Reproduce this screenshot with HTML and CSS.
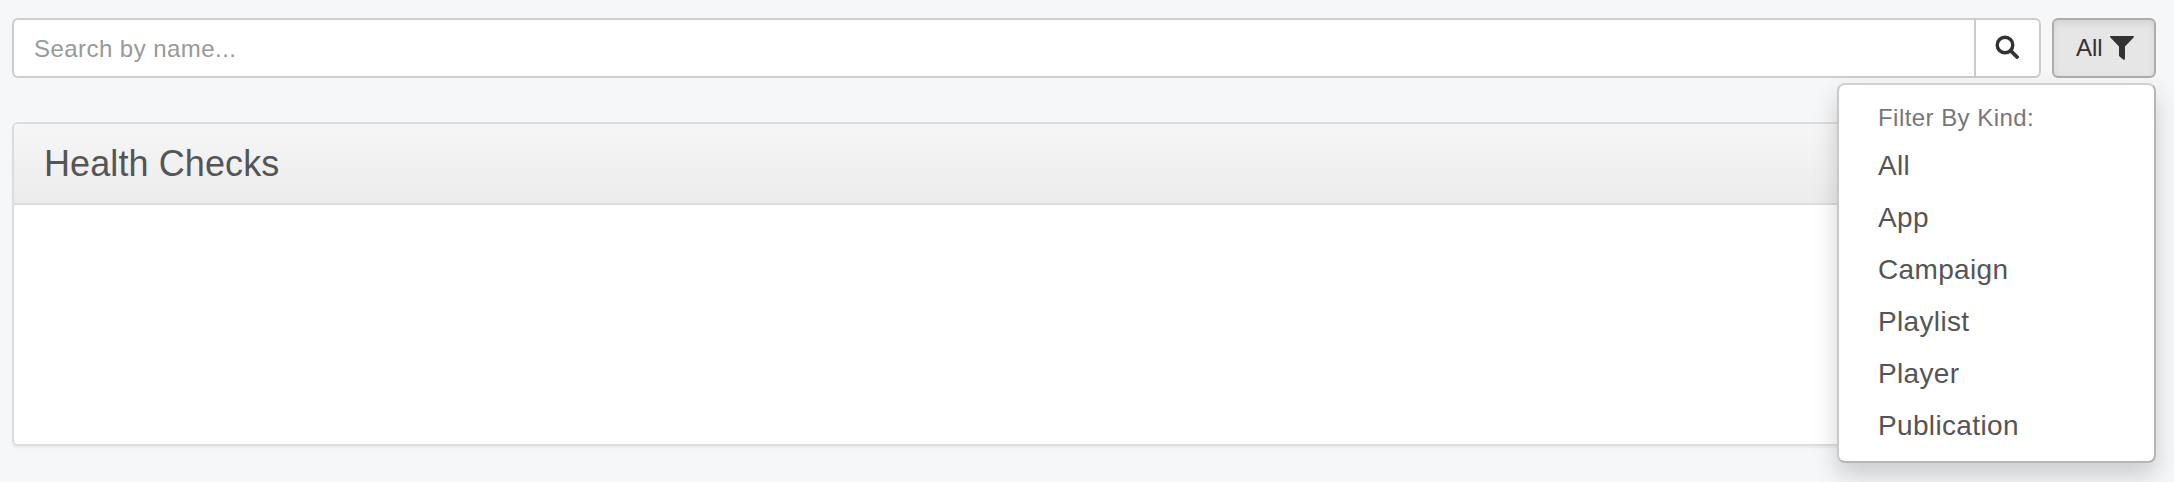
FILE: index.html
```html
<!DOCTYPE html>
<html>
<head>
    <title>Health Checks</title>
    <link rel="stylesheet" href="styles.css">
</head>
<body>
    <div class="toolbar">
        <div class="search-group">
            <input class="search-input" type="text" placeholder="Search by name...">
            <button class="search-button" type="button">
                <svg class="search-icon" viewBox="0 0 24 24" width="24" height="24">
                    <circle cx="10" cy="10" r="7.8" fill="none" stroke="#333" stroke-width="3.4"/>
                    <path d="M15.8 15.8L22 22" fill="none" stroke="#333" stroke-width="3.8" stroke-linecap="round"/>
                </svg>
            </button>
        </div>
        <div class="filter">
            <button class="filter-button" type="button">
                All
                <svg class="filter-icon" viewBox="0 0 24 24" width="24" height="24">
                    <path d="M0.6 0H23.4C24 0 24.2 0.8 23.8 1.3L15 10.4V22.4C15 23.6 14 24 13.2 23.4L9.8 20.8C9.2 20.3 9 19.8 9 19.2V10.4L0.2 1.3C-0.2 0.8 0 0 0.6 0Z" fill="#333"/>
                </svg>
            </button>
            <ul class="filter-menu">
                <li class="filter-menu-header">Filter By Kind:</li>
                <li class="filter-menu-item">All</li>
                <li class="filter-menu-item">App</li>
                <li class="filter-menu-item">Campaign</li>
                <li class="filter-menu-item">Playlist</li>
                <li class="filter-menu-item">Player</li>
                <li class="filter-menu-item">Publication</li>
            </ul>
        </div>
    </div>

    <div class="panel">
        <div class="panel-heading">
            <h3 class="panel-title">Health Checks</h3>
        </div>
        <div class="panel-body"></div>
    </div>
</body>
</html>
```

FILE: styles.css
```css
html {
    height: 100%;
}

body {
    box-sizing: border-box;
    min-height: 100%;
    margin: 0;
    padding: 18px 18px 0 12px;
    background-color: #f6f7f9;
    font-family: "Liberation Sans", Arial, sans-serif;
    color: #555555;
}

.toolbar {
    display: flex;
    gap: 11px;
    height: 60px;
}

.search-group {
    display: flex;
    flex: 1;
}

.search-input {
    flex: 1;
    min-width: 0;
    box-sizing: border-box;
    height: 60px;
    padding: 2px 20px 0;
    border: 2px solid #cccccc;
    border-right: 0;
    border-radius: 6px 0 0 6px;
    background-color: #ffffff;
    font-family: "Liberation Sans", Arial, sans-serif;
    font-size: 24px;
    letter-spacing: 0.45px;
    color: #555555;
    outline: none;
}

.search-input::placeholder {
    color: #999999;
    opacity: 1;
}

.search-button {
    display: flex;
    align-items: center;
    justify-content: center;
    box-sizing: border-box;
    width: 67px;
    height: 60px;
    padding: 0 2px 3px 0;
    border: 2px solid #cccccc;
    border-radius: 0 6px 6px 0;
    background-color: #ffffff;
}

.filter {
    position: relative;
}

.filter-button {
    display: flex;
    align-items: center;
    gap: 7px;
    box-sizing: border-box;
    width: 104px;
    height: 60px;
    padding: 0 0 0 22px;
    border: 2px solid #adadad;
    border-radius: 6px;
    background-color: #e6e6e6;
    box-shadow: inset 0 4px 7px rgba(0, 0, 0, 0.08);
    font-family: "Liberation Sans", Arial, sans-serif;
    font-size: 24px;
    color: #333333;
}

.filter-menu {
    position: absolute;
    top: 65px;
    right: 0;
    box-sizing: border-box;
    width: 319px;
    height: 380px;
    margin: 0;
    padding: 14px 0 0 39px;
    list-style: none;
    border: 2px solid;
    border-color: #d2d2d2 #b6b6b6 #b6b6b6 #c8c8c8;
    border-radius: 8px;
    background-color: #ffffff;
    box-shadow: 0 12px 24px rgba(0, 0, 0, 0.175);
}

.filter-menu-header {
    height: 41px;
    line-height: 38px;
    font-size: 24px;
    letter-spacing: 0.45px;
    color: #777777;
}

.filter-menu-item {
    height: 52px;
    line-height: 52px;
    font-size: 28px;
    letter-spacing: 0.35px;
    color: #555555;
}

.panel {
    box-sizing: border-box;
    height: 324px;
    margin-top: 44px;
    border: 2px solid #dddddd;
    border-radius: 6px;
    background-color: #ffffff;
    box-shadow: 0 2px 2px rgba(0, 0, 0, 0.05);
}

.panel-heading {
    box-sizing: border-box;
    height: 81px;
    padding: 0 30px;
    border-bottom: 2px solid #dddddd;
    border-radius: 4px 4px 0 0;
    background-image: linear-gradient(to bottom, #f6f6f6, #ececec);
}

.panel-title {
    margin: 0;
    line-height: 79px;
    font-size: 36px;
    font-weight: normal;
    letter-spacing: 0.1px;
    color: #555555;
}
```
